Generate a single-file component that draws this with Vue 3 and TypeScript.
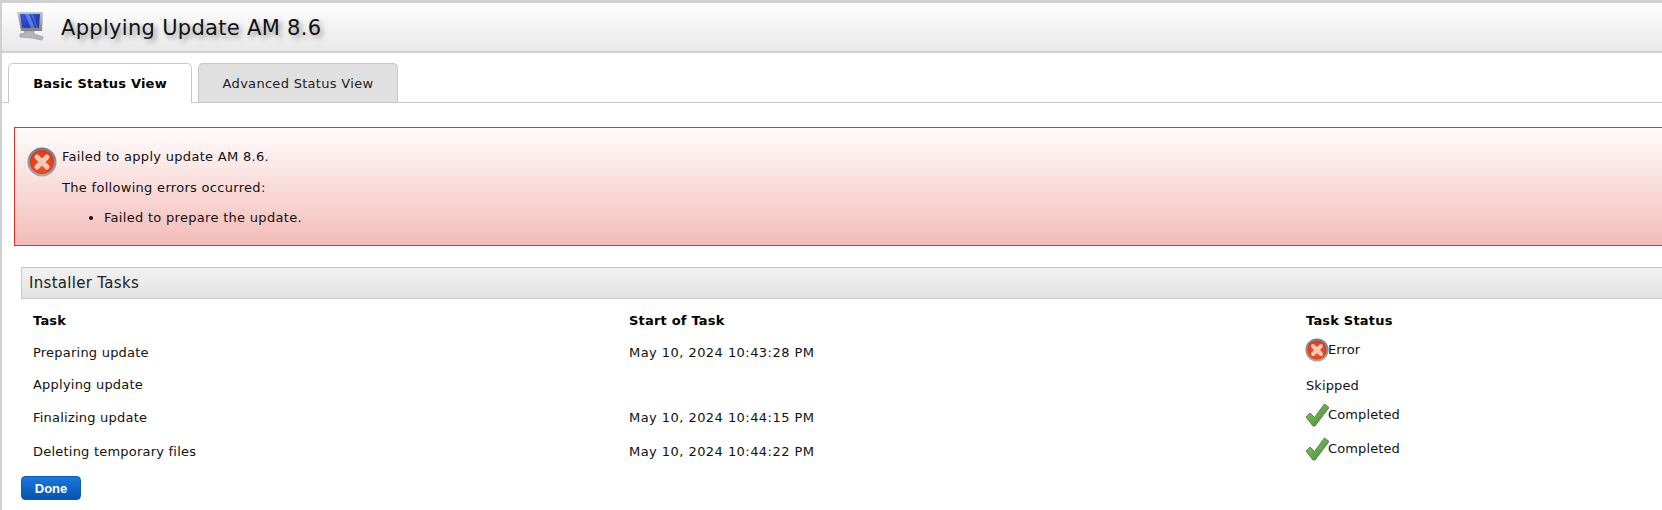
<script setup lang="ts">
interface Row { task: string; start: string; status: string; icon: 'error' | 'check' | null }
const rows: Row[] = [
  { task: 'Preparing update', start: 'May 10, 2024 10:43:28 PM', status: 'Error', icon: 'error' },
  { task: 'Applying update', start: '', status: 'Skipped', icon: null },
  { task: 'Finalizing update', start: 'May 10, 2024 10:44:15 PM', status: 'Completed', icon: 'check' },
  { task: 'Deleting temporary files', start: 'May 10, 2024 10:44:22 PM', status: 'Completed', icon: 'check' },
]
</script>

<template>
  <div class="page">
    <header class="head">
      <svg class="monitor" width="30" height="30" viewBox="0 0 30 30">
        <defs>
          <linearGradient id="scr" x1="0" y1="0" x2="1" y2="1">
            <stop offset="0" stop-color="#2f5be4" />
            <stop offset="1" stop-color="#1f2fa0" />
          </linearGradient>
          <linearGradient id="bez" x1="0" y1="0" x2="0" y2="1">
            <stop offset="0" stop-color="#c4c7cb" />
            <stop offset="1" stop-color="#7f8388" />
          </linearGradient>
        </defs>
        <path d="M8 20 L18 20 L18 23 L27 26 L26 29 L16 27 L4 26 L4 23 L9 22 Z" fill="#b2b5b9" stroke="#8e9195" stroke-width="0.6" />
        <path d="M1 1 L27 1 L26 20 L5 20 Z" fill="url(#bez)" />
        <path d="M4 3 L24 3 L23 17 L6 17 Z" fill="url(#scr)" />
        <path d="M9 3 L13 3 L19 17 L15 17 Z" fill="#7d99f2" opacity="0.65" />
        <path d="M15 3 L16.5 3 L22 17 L20.5 17 Z" fill="#7d99f2" opacity="0.5" />
      </svg>
      <h1 class="title">Applying Update AM 8.6</h1>
    </header>

    <nav class="tabs">
      <div class="tab active">Basic Status View</div>
      <div class="tab">Advanced Status View</div>
    </nav>

    <section class="alert">
      <svg class="ic-err big" viewBox="0 0 30 30">
        <defs>
          <radialGradient id="redball" cx="0.5" cy="0.6" r="0.6">
            <stop offset="0" stop-color="#f75c1e" />
            <stop offset="1" stop-color="#dc3618" />
          </radialGradient>
          <linearGradient id="ring" x1="0" y1="0" x2="0" y2="1">
            <stop offset="0" stop-color="#777a7e" />
            <stop offset="1" stop-color="#a6a9ad" />
          </linearGradient>
        </defs>
        <circle cx="15" cy="15" r="14.5" fill="url(#ring)" />
        <circle cx="15" cy="15" r="12" fill="url(#redball)" />
        <path d="M10 10 L20 20 M20 10 L10 20" stroke="#f6c9bd" stroke-width="5" stroke-linecap="round" />
      </svg>
      <div class="alert-body">
        <p>Failed to apply update AM 8.6.</p>
        <p>The following errors occurred:</p>
        <ul><li>Failed to prepare the update.</li></ul>
      </div>
    </section>

    <h2 class="section">Installer Tasks</h2>

    <table class="tasks">
      <colgroup>
        <col class="c1" /><col class="c2" /><col />
      </colgroup>
      <thead>
        <tr><th>Task</th><th>Start of Task</th><th>Task Status</th></tr>
      </thead>
      <tbody>
        <tr v-for="r in rows" :key="r.task" :class="{ tall: r.icon === 'check' }">
          <td class="name">{{ r.task }}</td>
          <td class="when">{{ r.start }}</td>
          <td>
            <span class="status">
              <svg v-if="r.icon === 'error'" class="ic-err" viewBox="0 0 30 30">
                <circle cx="15" cy="15" r="14.5" fill="url(#ring)" />
                <circle cx="15" cy="15" r="12" fill="url(#redball)" />
                <path d="M10 10 L20 20 M20 10 L10 20" stroke="#f6c9bd" stroke-width="5" stroke-linecap="round" />
              </svg>
              <svg v-else-if="r.icon === 'check'" class="ic-check" viewBox="0 0 24 24">
                <defs>
                  <linearGradient id="chk" x1="0" y1="0" x2="1" y2="1">
                    <stop offset="0" stop-color="#86c964" />
                    <stop offset="1" stop-color="#3f8f30" />
                  </linearGradient>
                </defs>
                <path d="M1 14 L5 10 L9.5 14.5 L19.5 1 L24 4.5 L10 23 L8 23 Z" fill="url(#chk)" stroke="#5a6f52" stroke-width="0.9" stroke-linejoin="round" />
              </svg>
              <span class="status-text">{{ r.status }}</span>
            </span>
          </td>
        </tr>
      </tbody>
    </table>

    <button class="done" type="button">Done</button>
  </div>
</template>

<style>
html, body { margin: 0; background: #fff; overflow: hidden; }
</style>

<style scoped>
.page {
  box-sizing: border-box;
  width: 1662px;
  height: 510px;
  border-top: 3px solid #d0d0d0;
  border-left: 2px solid #d0d0d0;
  font-family: "DejaVu Sans", Verdana, sans-serif;
  font-size: 13px;
  letter-spacing: 0.3px;
  color: #111;
  background: #fff;
  overflow: hidden;
}
.head {
  display: flex;
  align-items: center;
  height: 48px;
  padding-left: 14px;
  background: linear-gradient(#fff, #e8e8e8);
  border-bottom: 2px solid #cfcfcf;
  margin-bottom: 10px;
}
.monitor { margin-top: -2px; }
.title {
  margin: 2px 0 0 15px;
  font-size: 21px;
  letter-spacing: 0.3px;
  font-weight: 400;
  line-height: 26px;
  color: #111;
  text-shadow: 3px 3px 5px #999;
}
.tabs {
  display: flex;
  gap: 6px;
  height: 39px;
  padding-left: 6px;
  border-bottom: 1px solid #c8c8c8;
}
.tab {
  box-sizing: border-box;
  width: 200px;
  height: 39px;
  display: flex;
  align-items: center;
  justify-content: center;
  background: #e0e0e0;
  border: 1px solid #c8c8c8;
  border-bottom: none;
  border-radius: 5px 5px 0 0;
  color: #222;
}
.tab.active {
  width: 184px;
  height: 40px;
  background: #fff;
  font-weight: 700;
  letter-spacing: 0.2px;
  color: #000;
}
.alert {
  box-sizing: border-box;
  display: flex;
  align-items: flex-start;
  height: 119px;
  margin: 24px 0 21px 12px;
  padding: 19px 0 0 12px;
  border: 1px solid #ee2c2c;
  border-right: none;
  background: linear-gradient(#fffdfd, #f3bcb8);
}
.ic-err.big { width: 30px; height: 30px; flex: none; margin: 0; }
.alert-body { margin-left: 5px; padding-top: 2px; }
.alert-body p { margin: 0 0 15px; line-height: 16px; }
.alert-body p + p { margin-bottom: 14px; }
.alert-body ul { margin: 0; padding-left: 42px; line-height: 16px; }
.section {
  box-sizing: border-box;
  height: 32px;
  margin: 0 0 0 19px;
  padding: 1px 0 0 7px;
  border: 1px solid #cacaca;
  border-width: 1px 0 1px 1px;
  background: linear-gradient(#f2f2f2, #e2e2e2);
  font-size: 15px;
  letter-spacing: 0.3px;
  font-weight: 400;
  line-height: 29px;
  color: #222;
}
.tasks {
  width: 1641px;
  margin-left: 19px;
  border-collapse: collapse;
  table-layout: fixed;
}
.c1 { width: 596px; }
.c2 { width: 677px; }
.tasks th, .tasks td {
  padding: 0 0 0 12px;
  text-align: left;
  height: 32px;
}
.tasks th {
  font-weight: 700;
  letter-spacing: 0.2px;
  color: #000;
  height: 37px;
  padding-top: 6px;
  box-sizing: border-box;
}
.tasks .name { letter-spacing: 0.22px; }
.tasks .when { letter-spacing: 0.45px; }
.tasks tr.tall td { height: 34px; }
.status { display: inline-flex; align-items: flex-start; letter-spacing: 0.12px; }
.status-text { line-height: 16px; padding-top: 3px; }
.ic-err { width: 24px; height: 24px; margin: -1px -1px 0 -1px; flex: none; }
.ic-check { width: 24px; height: 24px; margin: -1px -1px 0 -1px; flex: none; }
.done {
  display: block;
  box-sizing: border-box;
  width: 60px;
  height: 24px;
  margin: 8px 0 0 19px;
  padding: 0;
  border: 1px solid #0a5cb8;
  border-radius: 4px;
  background: linear-gradient(#1a78dc, #0554ae);
  color: #fff;
  font-family: "Liberation Sans", Arial, sans-serif;
  font-size: 13px;
  font-weight: 700;
  letter-spacing: 0;
}
</style>
